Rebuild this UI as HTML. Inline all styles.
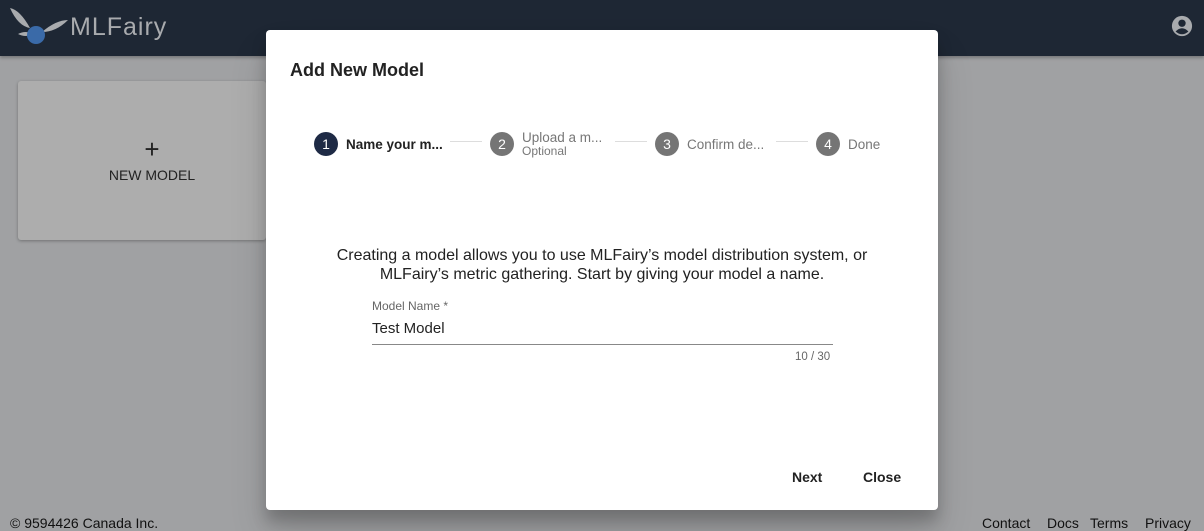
<!DOCTYPE html>
<html><head><meta charset="utf-8"><style>
*{box-sizing:border-box;margin:0;padding:0}
body{width:1204px;height:531px;overflow:hidden;background:#a0a1a3;font-family:"Liberation Sans",Arial,sans-serif;position:relative}
.hdr{position:absolute;left:0;top:0;width:1204px;height:56px;background:#1e2734;box-shadow:0 2px 3px rgba(0,0,0,.25)}
.logo{position:absolute;left:70px;top:13px;font-size:25px;color:#a9abae;letter-spacing:1px}
.card{position:absolute;left:18px;top:81px;width:248px;height:159px;background:#adadad;border-radius:3px;box-shadow:0 1px 3px rgba(0,0,0,.3)}
.card .p{position:absolute;left:0;width:268px;top:53px;text-align:center;font-size:26px;color:#222;font-weight:300}
.card .t{position:absolute;left:0;width:268px;top:86px;text-align:center;font-size:14px;color:#222}
.foot{position:absolute;top:515px;font-size:14px;color:#111}
.dlg{position:absolute;left:266px;top:30px;width:672px;height:480px;background:#fff;border-radius:4px;box-shadow:0 11px 15px rgba(0,0,0,.2),0 24px 38px rgba(0,0,0,.14)}
.title{position:absolute;left:24px;top:30px;font-size:18px;font-weight:bold;color:#222}
.step{position:absolute;top:102px;display:flex;align-items:center;font-size:13.5px;color:#777}
.c{width:24px;height:24px;border-radius:50%;background:#757575;color:#fff;font-size:14px;display:flex;align-items:center;justify-content:center;margin-right:8px}
.line{position:absolute;top:111px;height:1px;background:#ddd}
.txt{position:absolute;left:0;width:672px;top:216px;text-align:center;font-size:16px;line-height:19px;color:#222}
.lbl{position:absolute;left:106px;top:269px;font-size:12px;color:#666}
.val{position:absolute;left:106px;top:290px;font-size:15px;color:#222}
.ul{position:absolute;left:106px;top:314px;width:461px;height:1px;background:#888}
.cnt{position:absolute;left:529px;top:321px;font-size:11.5px;color:#666}
.btn{position:absolute;top:439px;font-size:14px;font-weight:bold;color:#222}
</style></head><body>
<div class="hdr">
<svg style="position:absolute;left:8px;top:4px" width="60" height="40" viewBox="0 0 60 40">
<path d="M2 4 Q12 6 22 24 Q10 22 2 4Z" fill="#a9abae"/>
<path d="M60 16 Q48 16 34 28 Q48 28 60 16Z" fill="#a9abae"/>
<path d="M10 30 Q18 26 24 30 Q18 34 10 30Z" fill="#a9abae"/>
<circle cx="28" cy="31" r="9" fill="#3a6aa8"/>
</svg>
<div class="logo">MLFairy</div>
<svg style="position:absolute;left:1171px;top:15px" width="22" height="22" viewBox="0 0 24 24"><circle cx="12" cy="12" r="11" fill="#a9abae"/><circle cx="12" cy="9" r="4" fill="#1e2734"/><path d="M5 18 Q12 11 19 18 Q12 24 5 18Z" fill="#1e2734"/></svg>
</div>
<div class="card"><div class="p">+</div><div class="t">NEW MODEL</div></div>
<div class="foot" style="left:10px">© 9594426 Canada Inc.</div>
<div class="foot" style="left:982px">Contact</div>
<div class="foot" style="left:1047px">Docs</div>
<div class="foot" style="left:1090px">Terms</div>
<div class="foot" style="left:1145px">Privacy</div>
<div class="dlg">
<div class="title">Add New Model</div>
<div class="step" style="left:48px"><div class="c" style="background:#1e2a45">1</div><span style="color:#222;font-weight:bold">Name your m...</span></div>
<div class="line" style="left:184px;width:32px"></div>
<div class="step" style="left:224px;top:100px"><div class="c">2</div><div><div style="line-height:15px">Upload a m...</div><div style="font-size:12px;line-height:13px">Optional</div></div></div>
<div class="line" style="left:349px;width:32px"></div>
<div class="step" style="left:389px"><div class="c">3</div>Confirm de...</div>
<div class="line" style="left:510px;width:32px"></div>
<div class="step" style="left:550px"><div class="c">4</div>Done</div>
<div class="txt">Creating a model allows you to use MLFairy’s model distribution system, or<br>MLFairy’s metric gathering. Start by giving your model a name.</div>
<div class="lbl">Model Name *</div>
<div class="val">Test Model</div>
<div class="ul"></div>
<div class="cnt">10 / 30</div>
<div class="btn" style="left:526px">Next</div>
<div class="btn" style="left:597px">Close</div>
</div>
</body></html>
